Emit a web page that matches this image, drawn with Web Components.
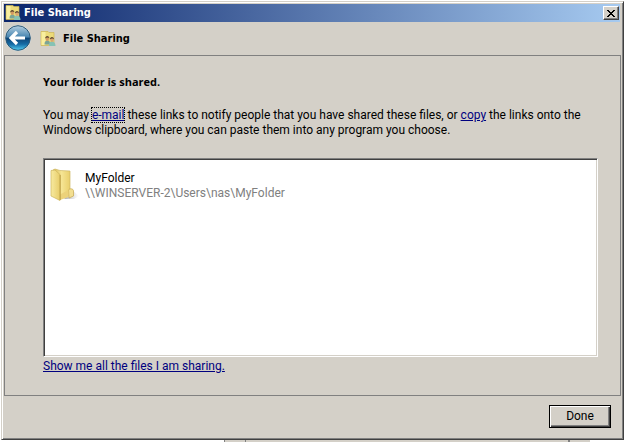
<!DOCTYPE html>
<html lang="en">
<head>
<meta charset="utf-8">
<title>File Sharing</title>
<style>
  html, body {
    height: 100%;
    margin: 0;
  }

  body {
    background: #fff;
    font: 12px/15px Roboto, "Liberation Sans", sans-serif;
    color: #000;
  }
</style>
</head>
<body>
<sharing-wizard></sharing-wizard>

<script>
class SharingIcon extends HTMLElement {
  constructor() {
    super();
    this.attachShadow({ mode: 'open' });
    this.shadowRoot.innerHTML = `
      <style>
        :host { display: block; width: 16px; height: 16px; flex: none; }
        svg { display: block; }
      </style>
      <svg width="16" height="16" viewBox="0 0 16 16" aria-hidden="true">
        <path d="M1 .5h7l1 1h5v13H1z" fill="#ecda78" stroke="#cdb655" stroke-width=".7"/>
        <path d="M1.500 1h4v13h-4z" fill="#f8ee9f"/>
        <path d="M4.500 13.500c0-3 1-4 3-4s2.500 1.500 2.500 4z" fill="#7ba596"/>
        <path d="M9 15c0-3.500 1-4.500 3-4.500s3.500 1.500 3.500 4.500z" fill="#86c2b4"/>
        <ellipse cx="7.300" cy="7.800" rx="1.700" ry="2.200" fill="#d39a62"/>
        <path d="M5.200 7.500c-.2-3.500 4.300-3.500 4.200 0-1-1.300-2.600-1.300-4.200 0z" fill="#5c4630"/>
        <ellipse cx="12" cy="8.800" rx="1.700" ry="2.200" fill="#dba570"/>
        <path d="M9.900 8.500c-.2-3.500 4.300-3.500 4.200 0-1-1.300-2.600-1.300-4.200 0z" fill="#5f4a32"/>
      </svg>
    `;
  }
}

class FolderIcon extends HTMLElement {
  constructor() {
    super();
    this.attachShadow({ mode: 'open' });
    this.shadowRoot.innerHTML = `
      <style>
        :host { display: block; width: 32px; height: 36px; flex: none; }
        svg { display: block; }
      </style>
      <svg width="32" height="36" viewBox="0 0 32 36" aria-hidden="true">
        <defs>
          <linearGradient id="back"><stop offset="0" stop-color="#d9bb52"/><stop offset=".5" stop-color="#f6e594"/><stop offset="1" stop-color="#e9cf6c"/></linearGradient>
          <linearGradient id="front"><stop offset="0" stop-color="#f7eaa0"/><stop offset="1" stop-color="#e8cd69"/></linearGradient>
          <linearGradient id="shade"><stop offset="0" stop-color="#777" stop-opacity=".6"/><stop offset="1" stop-color="#999" stop-opacity="0"/></linearGradient>
        </defs>
        <path d="M16 32 24 23l7 6-5 3z" fill="url(#shade)"/>
        <path d="M5 3 7 2l5 1.500 10 .5v24l-11 4.500z" fill="url(#back)" stroke="#cfb866" stroke-width=".7"/>
        <path d="M20.500 23c1-2 5-1.500 5 1v5L21 31z" fill="#f3df91" stroke="#c5a84f" stroke-width=".7"/>
        <path d="M12 27.500 20.500 23v7L12 33z" fill="#ecd27a"/>
        <path d="M3 3.500 7 3l5 4.500v26L3 29z" fill="url(#front)" stroke="#cdb45c" stroke-width=".7"/>
        <path d="M12.200 8v25" stroke="#b89840" stroke-width=".8"/>
      </svg>
    `;
  }
}

class TitleBar extends HTMLElement {
  constructor() {
    super();
    this.attachShadow({ mode: 'open' });
    this.shadowRoot.innerHTML = `
      <style>
        :host {
          display: flex;
          align-items: center;
          gap: 3px;
          height: 18px;
          padding: 0 1px;
          background: linear-gradient(to right, #0a246a, #a6caf0);
          color: #fff;
          font: bold 11px/18px "DejaVu Sans Condensed", "DejaVu Sans", sans-serif;
        }

        .title { flex: 1; }

        button {
          display: flex;
          align-items: center;
          justify-content: center;
          width: 16px;
          height: 14px;
          padding: 0;
          border: 1px solid;
          border-color: #fff #404040 #404040 #fff;
          box-shadow: inset -1px -1px #808080;
          background: #d4d0c8;
        }
      </style>
      <sharing-icon></sharing-icon>
      <span class="title"><slot></slot></span>
      <button type="button" aria-label="Close">
        <svg width="8" height="7" viewBox="0 0 8 7" shape-rendering="crispEdges" aria-hidden="true">
          <path d="M0 0h2v1h1v1h2V1h1V0h2v1H7v1H6v1H5v1h1v1h1v1h1v1H6V6H5V5H3v1H2v1H0V6h1V5h1V4h1V3H2V2H1V1H0z"/>
        </svg>
      </button>
    `;
  }
}

class WizardHeader extends HTMLElement {
  constructor() {
    super();
    this.attachShadow({ mode: 'open' });
    this.shadowRoot.innerHTML = `
      <style>
        :host {
          display: flex;
          align-items: center;
          height: 33px;
          font: bold 11px/16px "DejaVu Sans Condensed", "DejaVu Sans", sans-serif;
        }

        button {
          width: 28px;
          height: 28px;
          margin: 0 8px 2px 0;
          padding: 0;
          border: 0;
          background: none;
        }

        svg { display: block; }

        h1 {
          margin: 0 0 0 7px;
          font: inherit;
        }
      </style>
      <button type="button" aria-label="Back">
        <svg width="28" height="28" viewBox="0 0 28 28" aria-hidden="true">
          <defs>
            <linearGradient id="ball" x2="0" y2="1">
              <stop offset="0" stop-color="#b4cfe0"/>
              <stop offset=".45" stop-color="#4a87b2"/>
              <stop offset=".52" stop-color="#0f4678"/>
              <stop offset=".75" stop-color="#156ba5"/>
              <stop offset="1" stop-color="#55d0f2"/>
            </linearGradient>
          </defs>
          <circle cx="14" cy="14" r="13" fill="#e4e8ea"/>
          <circle cx="14" cy="14" r="12.300" fill="url(#ball)" stroke="#2d5874" stroke-width="1"/>
          <path d="M13 8 7 14l6 6M7.500 14h13.500" fill="none" stroke="#fff" stroke-width="3.200"/>
        </svg>
      </button>
      <sharing-icon></sharing-icon>
      <h1><slot></slot></h1>
    `;
  }
}

class SharedItem extends HTMLElement {
  constructor() {
    super();
    this.attachShadow({ mode: 'open' });
    this.shadowRoot.innerHTML = `
      <style>
        :host {
          display: flex;
          align-items: flex-start;
          gap: 5px;
        }

        .text { padding-top: 4px; }
        .path { color: #808080; }
      </style>
      <folder-icon></folder-icon>
      <div class="text">
        <div><slot></slot></div>
        <div class="path"><slot name="path"></slot></div>
      </div>
    `;
  }
}

class SharingWizard extends HTMLElement {
  constructor() {
    super();
    this.attachShadow({ mode: 'open' });
    this.shadowRoot.innerHTML = `
      <style>
        :host {
          display: flex;
          flex-direction: column;
          box-sizing: border-box;
          height: 100%;
          background: #fff;
        }

        .window {
          flex: 1;
          display: flex;
          flex-direction: column;
          margin: 1px 0 0 1px;
          padding: 2px 2px 1px;
          border: 1px solid;
          border-color: #d4d0c8 #404040 #404040 #d4d0c8;
          box-shadow: inset 1px 1px #fff, inset -1px -1px #808080;
          background: #d4d0c8;
        }

        title-bar { margin-right: 1px; }

        main {
          flex: 1;
          display: flex;
          flex-direction: column;
          align-items: flex-start;
          padding: 18px 22px 21px 38px;
          border: 1px solid #808080;
        }

        h2 {
          margin: 0 0 19px;
          font: bold 11px/15px "Open Sans", "Noto Sans", sans-serif;
        }

        p { margin: 0 0 20px; }
        a { color: #00007f; }
        .focused { outline: 1px dotted #000; }

        .list {
          flex: 1;
          align-self: stretch;
          margin-bottom: 2px;
          padding: 8px 4px;
          border: 1px solid;
          border-color: #808080 #fff #fff #808080;
          box-shadow: inset 1px 1px #404040, inset -1px -1px #d4d0c8;
          background: #fff;
        }

        footer {
          display: flex;
          justify-content: flex-end;
          padding: 9px 10px 10px;
        }

        .done {
          width: 62px;
          height: 23px;
          padding: 0;
          border: 1px solid #000;
          box-shadow: inset 1px 1px #fff, inset -1px -1px #404040, inset -2px -2px #808080;
          background: #d4d0c8;
          color: #000;
          font: inherit;
        }

        .behind {
          display: flex;
          height: 2px;
          padding: 0 34px 0 224px;
        }

        .behind span {
          flex: 1;
          border: solid #808080;
          border-width: 0 1px;
          background: #d4d0c8;
        }

        .behind .edge {
          flex: none;
          width: 20px;
          border-width: 0 0 0 1px;
        }
      </style>
      <div class="window">
        <title-bar>File Sharing</title-bar>
        <wizard-header>File Sharing</wizard-header>
        <main>
          <h2>Your folder is shared.</h2>
          <p>You may <a class="focused" href="#email">e-mail</a> these links to notify people that you have shared these files, or <a href="#copy">copy</a> the links onto the Windows clipboard, where you can paste them into any program you choose.</p>
          <div class="list">
            <shared-item>MyFolder<span slot="path">\\\\WINSERVER-2\\Users\\nas\\MyFolder</span></shared-item>
          </div>
          <a href="#shared">Show me all the files I am sharing.</a>
        </main>
        <footer><button class="done" type="button">Done</button></footer>
      </div>
      <div class="behind"><span class="edge"></span><span></span><span class="edge"></span></div>
    `;
  }
}

customElements.define('sharing-icon', SharingIcon);
customElements.define('folder-icon', FolderIcon);
customElements.define('title-bar', TitleBar);
customElements.define('wizard-header', WizardHeader);
customElements.define('shared-item', SharedItem);
customElements.define('sharing-wizard', SharingWizard);
</script>
</body>
</html>
